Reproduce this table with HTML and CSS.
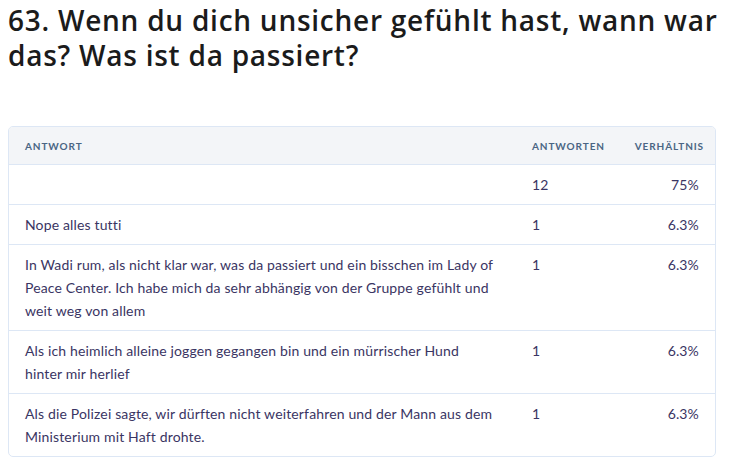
FILE: index.html
```html
<!DOCTYPE html>
<html lang="de">
<head>
<meta charset="utf-8">
<link rel="stylesheet" href="styles.css">
</head>
<body>
<h1 class="title">63. Wenn du dich unsicher gefühlt hast, wann war das? Was ist da passiert?</h1>
<div class="card">
<table class="tbl">
<colgroup><col class="w-ans"><col class="w-num"><col class="w-pct"></colgroup>
<thead>
<tr><th class="c-ans">Antwort</th><th class="c-num">Antworten</th><th class="c-pct">Verhältnis</th></tr>
</thead>
<tbody>
<tr><td class="c-ans"></td><td class="c-num">12</td><td class="c-pct">75%</td></tr>
<tr><td class="c-ans">Nope alles tutti</td><td class="c-num">1</td><td class="c-pct">6.3%</td></tr>
<tr><td class="c-ans">In Wadi rum, als nicht klar war, was da passiert und ein bisschen im Lady of Peace Center. Ich habe mich da sehr abhängig von der Gruppe gefühlt und weit weg von allem</td><td class="c-num">1</td><td class="c-pct">6.3%</td></tr>
<tr><td class="c-ans">Als ich heimlich alleine joggen gegangen bin und ein mürrischer Hund hinter mir herlief</td><td class="c-num">1</td><td class="c-pct">6.3%</td></tr>
<tr><td class="c-ans">Als die Polizei sagte, wir dürften nicht weiterfahren und der Mann aus dem Ministerium mit Haft drohte.</td><td class="c-num">1</td><td class="c-pct">6.3%</td></tr>
</tbody>
</table>
</div>
</body>
</html>
```
FILE: styles.css
```css
html, body { margin: 0; padding: 0; background: #fff; }
body { padding: 3px 8px 0 8px; font-family: "Lato", "Noto Sans", sans-serif; }
.title {
  margin: 0;
  font-family: "Open Sans", "Noto Sans", sans-serif;
  font-size: 28px;
  letter-spacing: 0.75px;
  line-height: 35px;
  font-weight: 600;
  color: #1b1b1b;
}
.card {
  margin-top: 53px;
  margin-right: 9px;
  border: 1px solid #dde7f5;
  border-radius: 5px;
  overflow: hidden;
}
.tbl { width: 100%; border-collapse: collapse; table-layout: fixed; }
.w-ans { width: 507px; }
.w-num { width: 100px; }
.w-pct { width: auto; }
.tbl th {
  background: #f3f5f8;
  color: #4a6584;
  font-size: 10px;
  font-weight: 700;
  letter-spacing: 0.9px;
  text-transform: uppercase;
  text-align: left;
  height: 37px;
  padding: 0 16px;
  border-bottom: 1px solid #dde7f5;
}
.tbl td {
  color: #3a3563;
  font-size: 14px;
  letter-spacing: 0.15px;
  line-height: 23px;
  padding: 8px 16px;
  vertical-align: top;
  border-bottom: 1px solid #dde7f5;
}
.tbl tbody tr:last-child td { border-bottom: 0; }
.tbl td.c-ans { padding-right: 21px; }
.tbl .c-pct { text-align: right; }
.tbl th.c-pct { padding-right: 11px; }
```
